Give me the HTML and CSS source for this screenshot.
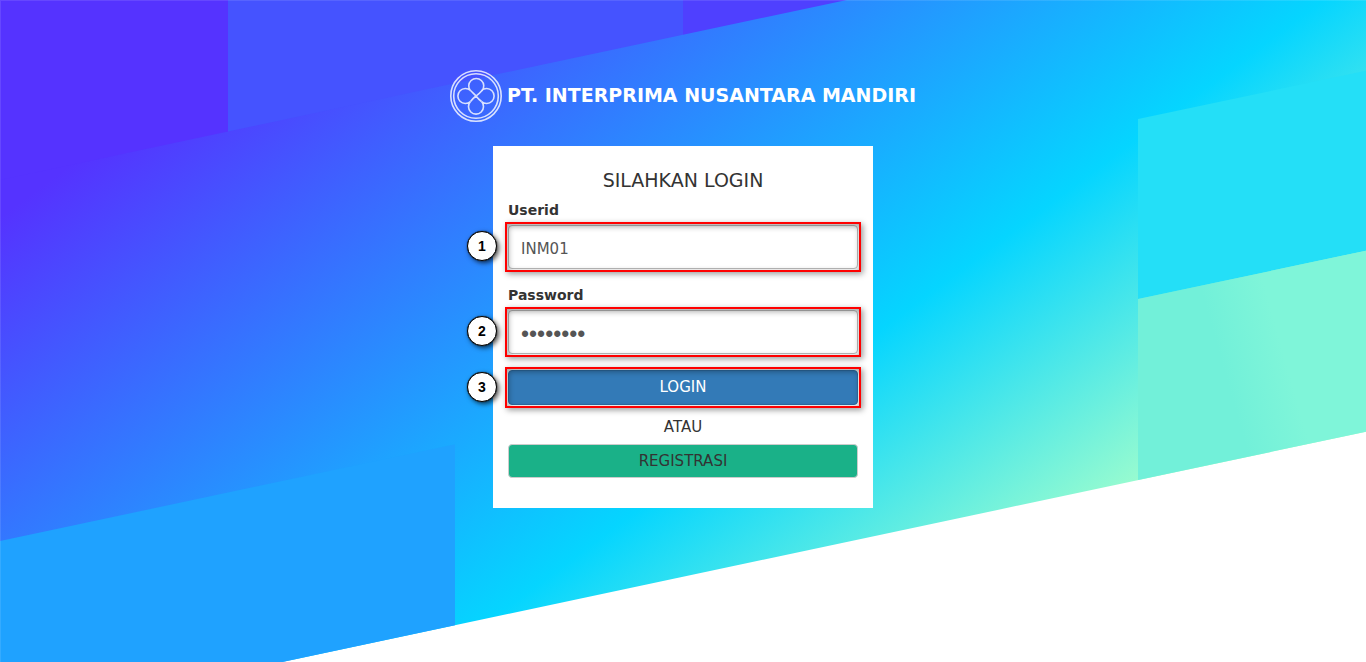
FILE: index.html
```html
<!DOCTYPE html>
<html lang="id">
<head>
<meta charset="utf-8">
<title>PT. Interprima Nusantara Mandiri</title>
<meta name="viewport" content="width=device-width, initial-scale=1">
<link rel="stylesheet" href="styles.css">
</head>
<body>
<div class="backdrop" aria-hidden="true">
  <div class="stripes">
    <span class="stripe stripe-indigo"></span>
    <span class="stripe stripe-blue"></span>
    <span class="stripe stripe-violet"></span>
    <span class="stripe stripe-cyan"></span>
    <span class="stripe stripe-sky"></span>
    <span class="stripe stripe-mint"></span>
  </div>
</div>
<main class="page">
  <header class="brand">
    <svg class="brand-logo" viewBox="0 0 52 52" aria-hidden="true">
      <circle cx="26" cy="26" r="25.200"/>
      <circle cx="26" cy="26" r="22.300"/>
      <path d="M20.500 20.800A7.500 7.500 0 1 1 32 20.800M31.500 31.500A7.500 7.500 0 1 1 20.500 31.500M20.500 20.500A7.500 7.500 0 1 0 20.500 31.500M31.500 20.500A7.500 7.500 0 1 1 31.500 31.500"/>
      <path d="M20.500 20.500C23 23 24.500 24 26 26S29.500 30 31.500 31.500M32 20.500C29.500 23.500 28 24.500 26 26S22.500 29 20.500 31.500"/>
    </svg>
    <h1 class="brand-name">PT. INTERPRIMA NUSANTARA MANDIRI</h1>
  </header>
  <form class="card">
    <h2 class="card-title">SILAHKAN LOGIN</h2>
    <div class="field">
      <label class="label" for="userid">Userid</label>
      <div class="callout"><span class="badge">1</span><input class="input" id="userid" type="text" value="INM01"></div>
    </div>
    <div class="field">
      <label class="label" for="password">Password</label>
      <div class="callout"><span class="badge">2</span><input class="input input-password" id="password" type="password" value="password"></div>
    </div>
    <div class="callout"><span class="badge">3</span><button class="btn btn-primary" type="submit">LOGIN</button></div>
    <p class="divider">ATAU</p>
    <button class="btn btn-register" type="button">REGISTRASI</button>
  </form>
</main>
</body>
</html>
```
FILE: styles.css
```css
* { box-sizing: border-box; }

body {
  margin: 0;
  background: #fff;
  color: #333;
  font: 14px/20px "DejaVu Sans", Verdana, sans-serif;
}

.backdrop {
  position: absolute;
  inset: 0;
  z-index: -1;
  overflow: hidden;
}

.backdrop::after {
  content: "";
  position: absolute;
  inset: 0;
  border-top: 1px solid rgba(255, 255, 255, 0.1);
  border-left: 1px solid rgba(255, 255, 255, 0.1);
}

.stripes {
  display: grid;
  grid-template-columns: repeat(6, 1fr);
  grid-template-rows: repeat(4, 1fr);
  height: 109vh;
  transform: skewY(-12deg);
  transform-origin: 0 0;
  background: linear-gradient(152deg, #5533ff 15%, #05d5ff 68%, #a6ffcb 94%);
}

.stripe-indigo { grid-area: 1 / 1 / 2 / 2; background: #5533ff; }
.stripe-blue { grid-area: 1 / 2 / 2 / 4; background: #4553ff; }
.stripe-violet { grid-area: 1 / 4 / 2 / 7; background: #4f40ff; }
.stripe-cyan { grid-area: 3 / 6 / 4 / 7; background: #24dff7; }
.stripe-sky { grid-area: 4 / 1 / 5 / 3; background: #1fa2ff; }
.stripe-mint { grid-area: 4 / 6 / 5 / 7; background: linear-gradient(75deg, #72f0d9 40%, #7ff5d9 62%); }

.page {
  display: flex;
  flex-direction: column;
  align-items: center;
  gap: 24px;
  padding: 70px 15px 30px;
}

.brand {
  display: flex;
  align-items: center;
  gap: 5px;
}

.brand-logo {
  flex: none;
  width: 52px;
  height: 52px;
  fill: none;
  stroke: rgba(255, 255, 255, 0.8);
  stroke-width: 1.6px;
}

.brand-name {
  margin: 0;
  padding-bottom: 2px;
  color: #fff;
  font-size: 19px;
  font-weight: bold;
  line-height: 20px;
}

.card {
  display: flex;
  flex-direction: column;
  width: 100%;
  max-width: 380px;
  padding: 24px 15px 30px;
  background: #fff;
}

.card-title {
  margin: 0 0 10px;
  font-size: 19px;
  font-weight: normal;
  line-height: 20px;
  text-align: center;
}

.field {
  display: flex;
  flex-direction: column;
  gap: 2px;
  margin-bottom: 13px;
}

.field + .callout { margin-top: -3px; }

.label { font-weight: bold; }

.callout {
  position: relative;
  margin: 0 -3px;
  padding: 1px;
  border: 2px solid #f00;
}

.callout::after {
  content: "";
  position: absolute;
  inset: -2px;
  box-shadow: 2px 2px 6px rgba(0, 0, 0, 0.4);
  pointer-events: none;
}

.callout::before {
  content: "";
  position: absolute;
  inset: 0;
  box-shadow: inset 1px 2px 6px rgba(0, 0, 0, 0.4);
  pointer-events: none;
}

.badge {
  position: absolute;
  top: calc(50% - 16px);
  left: -40px;
  z-index: 1;
  width: 30px;
  height: 30px;
  border: 1px solid #000;
  border-radius: 50%;
  background: #fff;
  box-shadow: 0 0 1px #000, 2px 2px 5px rgba(0, 0, 0, 0.7);
  color: #000;
  font: bold 14px/28px "Liberation Sans", Arial, sans-serif;
  text-align: center;
}

.input {
  display: block;
  width: 100%;
  height: 44px;
  padding: 12px 12px 8px;
  border: 1px solid #bbb;
  border-radius: 4px;
  background: #fff;
  color: #555;
  font: 15px/20px "DejaVu Sans", Verdana, sans-serif;
}

.input-password { font: 23px/20px "Liberation Sans", Arial, sans-serif; }

.btn {
  display: block;
  width: 100%;
  padding: 6px 12px;
  border: 1px solid #ccc;
  border-radius: 4px;
  font: 15px/20px "DejaVu Sans", Verdana, sans-serif;
  text-align: center;
}

.btn-primary {
  padding: 6px 12px 7px;
  border-color: #2e6da4;
  background: #337ab7;
  color: #fff;
}

.btn-register {
  background: #1ab188;
  color: #333;
}

.divider {
  margin: 9px 0 7px;
  font-size: 15px;
  text-align: center;
}
```
